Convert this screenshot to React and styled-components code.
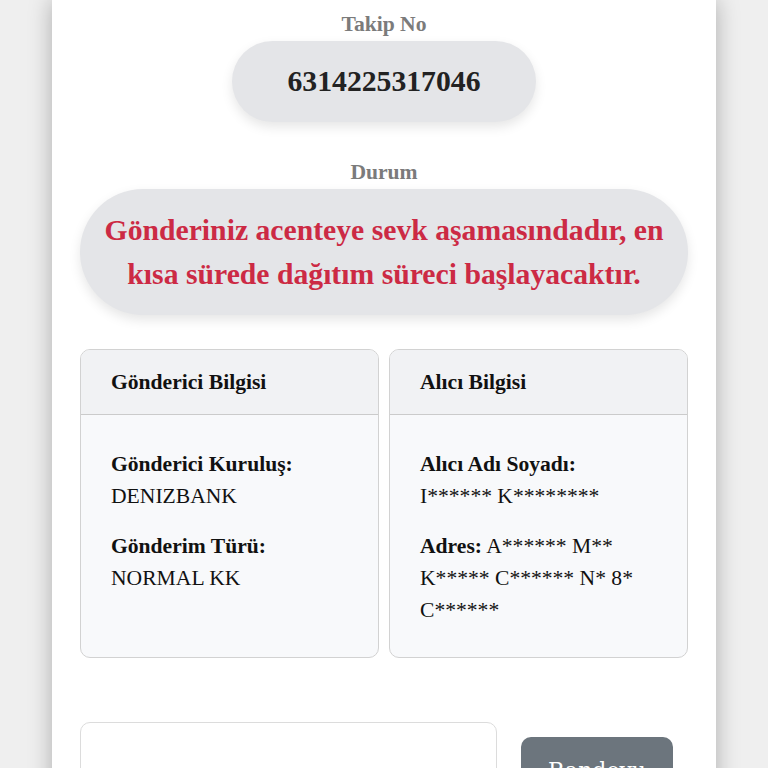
import React from 'react'
import styled, { createGlobalStyle } from 'styled-components'

const GlobalStyle = createGlobalStyle`
    html, body {
        margin: 0;
        padding: 0;
        background: #efefef;
        font-family: "Liberation Serif", "Times New Roman", serif;
        overflow: hidden;
    }
`

const Page = styled.div`
    width: 664px;
    min-height: 800px;
    margin: 0 auto;
    background: #ffffff;
    box-shadow: 0 0 22px rgba(0, 0, 0, 0.28);
    padding: 11px 28px 0;
    box-sizing: border-box;
    display: flex;
    flex-direction: column;
    align-items: center;
`

const Label = styled.div`
    font-size: 21.6px;
    font-weight: bold;
    color: #7b7b7b;
    line-height: 26px;
    margin-bottom: 4px;
`

const Pill = styled.div`
    background: #e4e5e8;
    border-radius: 999px;
    box-shadow: 0 5px 12px rgba(0, 0, 0, 0.1);
    text-align: center;
    font-weight: bold;
    box-sizing: border-box;
    width: ${p => p.wide ? '100%' : 'auto'};
    padding: ${p => p.wide ? '19px 20px' : '24px 56px'};
    font-size: 29.7px;
    line-height: ${p => p.wide ? '44px' : '33px'};
    color: ${p => p.wide ? '#cc2a44' : '#222'};
    margin-bottom: ${p => p.wide ? '34px' : '37px'};
`

const Cards = styled.div`
    width: 100%;
    display: grid;
    grid-template-columns: 1fr 1fr;
    gap: 10px;
`

const Card = styled.div`
    border: 1.5px solid #d2d2d2;
    border-radius: 10px;
    overflow: hidden;
    background: #f8f9fb;
    display: flex;
    flex-direction: column;
`

const CardHeader = styled.div`
    background: #f1f2f4;
    border-bottom: 1.5px solid #cbcbcb;
    padding: 0 30px;
    height: 64px;
    display: flex;
    align-items: center;
    font-size: 21.6px;
    font-weight: bold;
    color: #111;
`

const CardBody = styled.div`
    padding: 33px 30px 31px;
    display: flex;
    flex-direction: column;
    gap: 18px;
`

const Field = styled.div`
    font-size: 21.6px;
    line-height: 32px;
    color: #111;
`

const FieldName = styled.span`
    font-weight: bold;
    display: ${p => p.inline ? 'inline' : 'block'};
`

const FormRow = styled.div`
    width: 100%;
    display: flex;
    align-items: flex-start;
    gap: 24px;
    margin-top: 64px;
`

const Input = styled.input`
    width: 417px;
    height: 80px;
    border: 1.5px solid #dcdcdc;
    border-radius: 10px;
    box-sizing: border-box;
    background: #fff;
`

const Button = styled.button`
    width: 152px;
    height: 60px;
    margin-top: 15px;
    background: #6c757d;
    color: #fff;
    border: none;
    border-radius: 10px;
    font-family: "DejaVu Serif", Georgia, serif;
    font-size: 22px;
    padding-top: 8px;
`

const App = () => {
    return (
        <>
            <GlobalStyle />
            <Page>
                <Label>Takip No</Label>
                <Pill>6314225317046</Pill>
                <Label>Durum</Label>
                <Pill wide>Gönderiniz acenteye sevk aşamasındadır, en kısa sürede dağıtım süreci başlayacaktır.</Pill>
                <Cards>
                    <Card>
                        <CardHeader>Gönderici Bilgisi</CardHeader>
                        <CardBody>
                            <Field>
                                <FieldName>Gönderici Kuruluş:</FieldName>
                                DENIZBANK
                            </Field>
                            <Field>
                                <FieldName>Gönderim Türü:</FieldName>
                                NORMAL KK
                            </Field>
                        </CardBody>
                    </Card>
                    <Card>
                        <CardHeader>Alıcı Bilgisi</CardHeader>
                        <CardBody>
                            <Field>
                                <FieldName>Alıcı Adı Soyadı:</FieldName>
                                I****** K********
                            </Field>
                            <Field>
                                <FieldName inline>Adres:</FieldName> A****** M** K***** C****** N* 8* C******
                            </Field>
                        </CardBody>
                    </Card>
                </Cards>
                <FormRow>
                    <Input />
                    <Button>Randevu</Button>
                </FormRow>
            </Page>
        </>
    )
}

export default App
